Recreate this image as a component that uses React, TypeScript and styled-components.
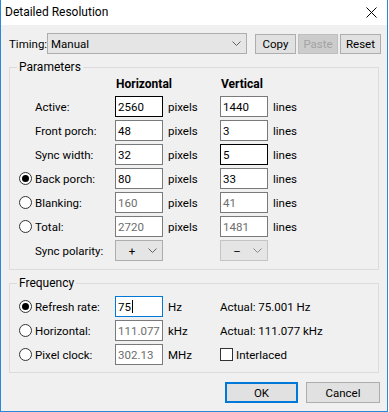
import React from 'react';
import styled, { createGlobalStyle } from 'styled-components';

const GlobalStyle = createGlobalStyle`
  html, body {
    margin: 0;
    padding: 0;
    background: #ffffff;
  }
  * {
    box-sizing: border-box;
  }
`;

const FONT = `Roboto, 'Liberation Sans', Arial, sans-serif`;

const Window = styled.div`
  width: 388px;
  height: 412px;
  border: 1px solid #2b88d8;
  border-top: none;
  background: #f0f0f0;
  font-family: ${FONT};
  font-size: 11.5px;
  color: #000;
  display: flex;
  flex-direction: column;
`;

const TitleBar = styled.div`
  height: 25px;
  background: #fff;
  display: flex;
  align-items: center;
  justify-content: space-between;
  padding: 0 10px 1px 4px;
  font-size: 12px;
`;

const Toolbar = styled.div`
  display: flex;
  align-items: center;
  padding: 8px 0 0 8px;
  height: 29px;
`;

const ToolLabel = styled.span`
  width: 38px;
`;

const Combo = styled.div<{ $width: number; $disabled?: boolean; $center?: boolean }>`
  width: ${(p) => p.$width}px;
  height: 21px;
  background: #e5e5e5;
  border: 1px solid ${(p) => (p.$disabled ? '#c4c4c4' : '#adadad')};
  display: flex;
  align-items: center;
  padding: 0 5px 0 ${(p) => (p.$center ? '0' : '3px')};
  span {
    flex: 1;
    text-align: ${(p) => (p.$center ? 'center' : 'left')};
  }
`;

const ComboCell = styled.div<{ $col: number }>`
  grid-column: ${(p) => p.$col};
`;

const Button = styled.button<{ $width: number; $default?: boolean; $tall?: boolean }>`
  width: ${(p) => p.$width}px;
  height: ${(p) => (p.$tall ? 21 : 20)}px;
  padding: 0;
  font-family: ${FONT};
  font-size: 11.5px;
  color: #000;
  background: #e1e1e1;
  border: ${(p) => (p.$default ? '2px solid #0078d7' : '1px solid #adadad')};
  border-radius: 0;
  &:disabled {
    background: #cccccc;
    border-color: #bfbfbf;
    color: #a3a3a3;
  }
`;

const ToolButtons = styled.div`
  display: flex;
  gap: 2px;
  margin-left: 8px;
`;

const Group = styled.fieldset<{ $pad: string }>`
  margin: 5px 8px 0 8px;
  border: 1px solid #dcdcdc;
  padding: ${(p) => p.$pad};
  min-width: 0;
`;

const Legend = styled.legend`
  padding: 0 2px;
  margin-left: -2px;
  line-height: 16px;
  font-size: 12px;
`;

const Grid = styled.div<{ $rows: string }>`
  display: grid;
  grid-template-columns: 16px 80px 48px 57px 48px 1fr;
  grid-template-rows: ${(p) => p.$rows};
  row-gap: 3px;
  align-items: center;
`;

const Header = styled.div<{ $col: number }>`
  grid-column: ${(p) => p.$col};
  font-weight: bold;
  font-size: 12px;
  padding-left: 1px;
  align-self: start;
  line-height: 16px;
`;

const Label = styled.span<{ $col?: number }>`
  grid-column: ${(p) => p.$col ?? 2};
  white-space: nowrap;
`;

const Unit = styled.span<{ $col: number }>`
  grid-column: ${(p) => p.$col};
  padding-left: 5px;
  white-space: nowrap;
`;

const Field = styled.div<{ $state?: 'hover' | 'focus' | 'disabled' }>`
  height: 21px;
  background: #fff;
  border: 1px solid
    ${(p) => (p.$state === 'hover' ? '#000' : p.$state === 'focus' ? '#0078d7' : '#7a7a7a')};
  color: ${(p) => (p.$state === 'disabled' ? '#6d6d6d' : '#000')};
  padding-left: 2px;
  display: flex;
  align-items: center;
  &::after {
    content: '';
    display: ${(p) => (p.$state === 'focus' ? 'block' : 'none')};
    width: 1px;
    height: 13px;
    margin-left: 1px;
    background: #000;
  }
`;

const Radio = styled.span<{ $checked?: boolean }>`
  grid-column: 1;
  width: 13px;
  height: 13px;
  border-radius: 50%;
  border: 1px solid #333;
  background: #fff;
  display: flex;
  align-items: center;
  justify-content: center;
  &::after {
    content: '';
    width: 7px;
    height: 7px;
    border-radius: 50%;
    background: #000;
    display: ${(p) => (p.$checked ? 'block' : 'none')};
  }
`;

const CheckRow = styled.div`
  grid-column: 5 / span 2;
  display: flex;
  align-items: center;
  gap: 3px;
`;

const CheckBox = styled.span`
  width: 13px;
  height: 13px;
  border: 1px solid #333;
  background: #fff;
`;

const Footer = styled.div`
  display: flex;
  justify-content: flex-end;
  gap: 8px;
  padding-right: 7px;
  margin-top: 9px;
`;

const Chevron = ({ color = '#606060' }: { color?: string }) => (
  <svg width="9" height="5" viewBox="0 0 9 5">
    <path d="M0.5 0.5 L4.5 4.5 L8.5 0.5" fill="none" stroke={color} strokeWidth="1" />
  </svg>
);

const CloseIcon = () => (
  <svg width="11" height="11" viewBox="0 0 11 11">
    <path d="M0.5 0.5 L10.5 10.5 M10.5 0.5 L0.5 10.5" stroke="#000" strokeWidth="1" />
  </svg>
);

type Row = {
  label: string;
  radio?: boolean;
  checked?: boolean;
  h: string;
  v: string;
  hState?: 'hover' | 'disabled';
  vState?: 'hover' | 'disabled';
};

const rows: Row[] = [
  { label: 'Active:', h: '2560', v: '1440', hState: 'hover' },
  { label: 'Front porch:', h: '48', v: '3' },
  { label: 'Sync width:', h: '32', v: '5', vState: 'hover' },
  { label: 'Back porch:', radio: true, checked: true, h: '80', v: '33' },
  { label: 'Blanking:', radio: true, h: '160', v: '41', hState: 'disabled', vState: 'disabled' },
  { label: 'Total:', radio: true, h: '2720', v: '1481', hState: 'disabled', vState: 'disabled' },
];

const App = () => {
  return (
    <>
      <GlobalStyle />
      <Window>
        <TitleBar>
          <span>Detailed Resolution</span>
          <CloseIcon />
        </TitleBar>

        <Toolbar>
          <ToolLabel>Timing:</ToolLabel>
          <Combo $width={200}>
            <span>Manual</span>
            <Chevron />
          </Combo>
          <ToolButtons>
            <Button $width={41}>Copy</Button>
            <Button $width={40} disabled>
              Paste
            </Button>
            <Button $width={41}>Reset</Button>
          </ToolButtons>
        </Toolbar>

        <Group $pad="1px 0 8px 9px">
          <Legend>Parameters</Legend>
          <Grid $rows="17px repeat(7, 21px)">
            <Header $col={3}>Horizontal</Header>
            <Header $col={5}>Vertical</Header>
            {rows.map((r) => (
              <React.Fragment key={r.label}>
                {r.radio && <Radio $checked={r.checked} />}
                <Label>{r.label}</Label>
                <Field $state={r.hState}>{r.h}</Field>
                <Unit $col={4}>pixels</Unit>
                <Field $state={r.vState}>{r.v}</Field>
                <Unit $col={6}>lines</Unit>
              </React.Fragment>
            ))}
            <Label>Sync polarity:</Label>
            <ComboCell $col={3}>
              <Combo $width={48} $center>
                <span>+</span>
                <Chevron />
              </Combo>
            </ComboCell>
            <ComboCell $col={5}>
              <Combo $width={48} $center $disabled>
                <span>–</span>
                <Chevron color="#8a8a8a" />
              </Combo>
            </ComboCell>
          </Grid>
        </Group>

        <Group $pad="5px 0 7px 9px">
          <Legend>Frequency</Legend>
          <Grid $rows="repeat(3, 21px)">
            <Radio $checked />
            <Label>Refresh rate:</Label>
            <Field $state="focus">75</Field>
            <Unit $col={4}>Hz</Unit>
            <Label $col={5}>Actual: 75.001 Hz</Label>

            <Radio />
            <Label>Horizontal:</Label>
            <Field $state="disabled">111.077</Field>
            <Unit $col={4}>kHz</Unit>
            <Label $col={5}>Actual: 111.077 kHz</Label>

            <Radio />
            <Label>Pixel clock:</Label>
            <Field $state="disabled">302.13</Field>
            <Unit $col={4}>MHz</Unit>
            <CheckRow>
              <CheckBox />
              <span>Interlaced</span>
            </CheckRow>
          </Grid>
        </Group>

        <Footer>
          <Button $width={73} $default $tall>
            OK
          </Button>
          <Button $width={74} $tall>
            Cancel
          </Button>
        </Footer>
      </Window>
    </>
  );
};

export default App;
